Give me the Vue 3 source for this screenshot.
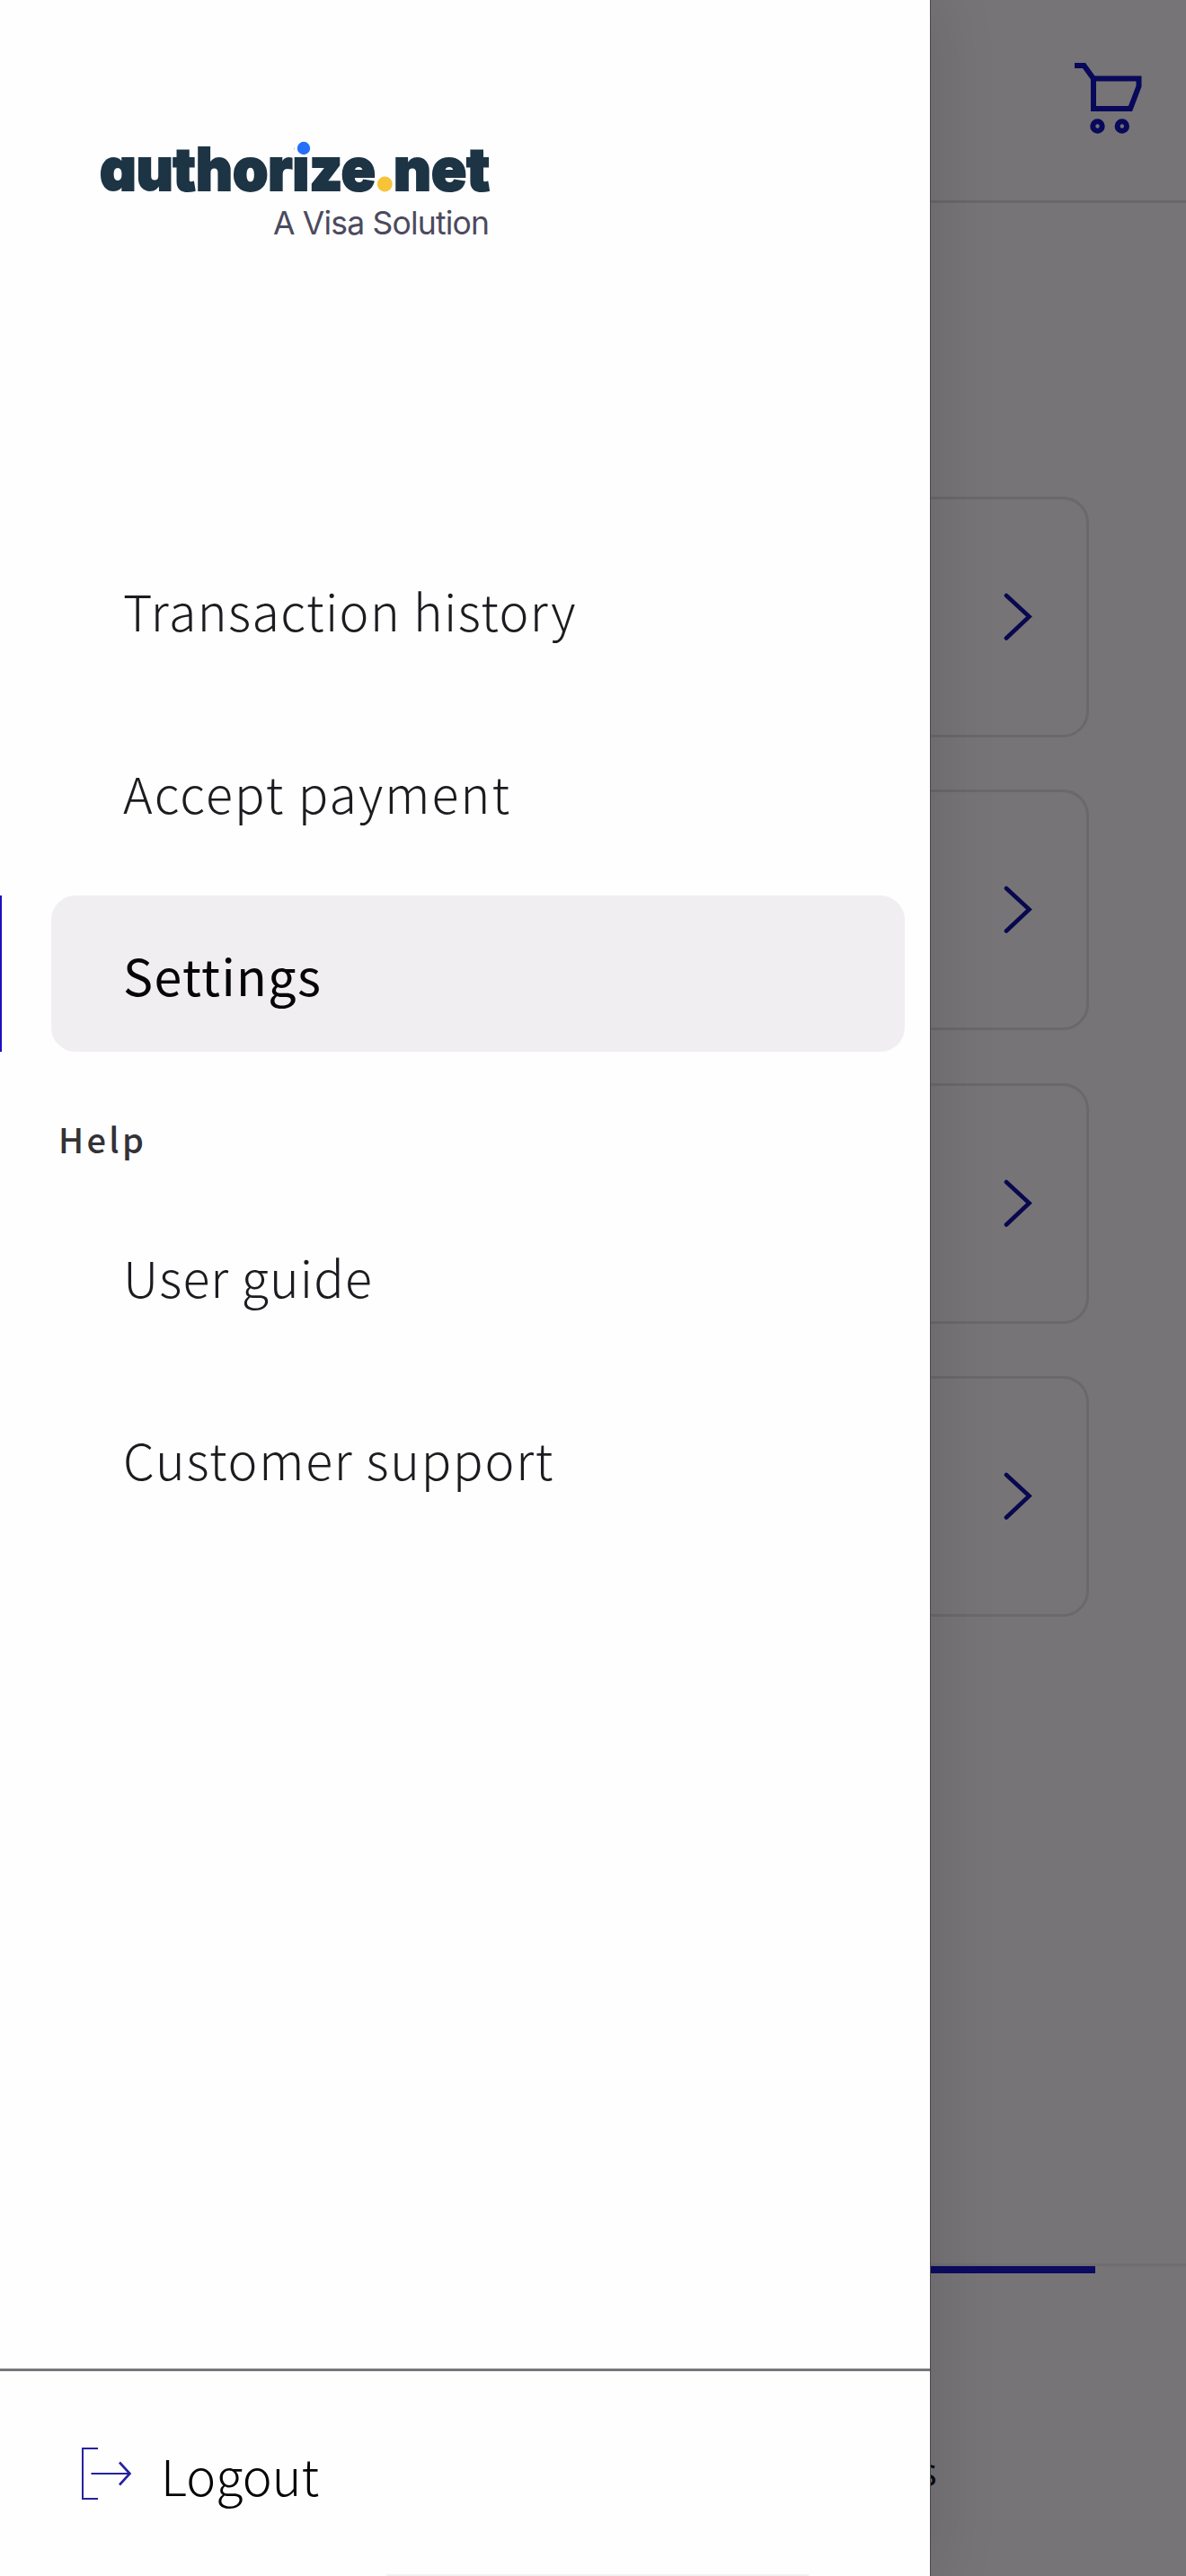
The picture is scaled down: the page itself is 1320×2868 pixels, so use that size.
<template>
  <div class="screen">
    <!-- Page under the drawer -->
    <div class="page">
      <header class="page-header">
        <svg class="cart-icon" viewBox="0 0 80 84" fill="none" stroke="#08095a" stroke-width="6">
          <path d="M3 7H13.5L24 21.5" />
          <path d="M24 21.5H74.5V30L65 55H24Z" />
          <circle cx="28.5" cy="74.5" r="5.2" />
          <circle cx="55.8" cy="74.5" r="5.2" />
        </svg>
      </header>

      <main class="cards">
        <div v-for="n in 4" :key="n" class="card">
          <svg class="chevron" viewBox="0 0 32 54" fill="none" stroke="#08084f" stroke-width="4.6" stroke-linecap="round">
            <path d="M3 3L28.5 26.500L3 50.500" />
          </svg>
        </div>
      </main>

      <footer class="tab-bar">
        <div class="tab active">
          <span class="tab-label">s</span>
        </div>
        <div class="tab-rest"></div>
      </footer>
    </div>

    <!-- Side drawer -->
    <aside class="drawer">
      <svg class="logo" viewBox="0 0 460 130">
        <g class="logo-name">
          <text x="11" y="66.5" textLength="307" lengthAdjust="spacingAndGlyphs">authorize</text>
          <text x="320" y="66.5" class="logo-dot" textLength="16" lengthAdjust="spacingAndGlyphs">.</text>
          <text x="338" y="66.5" textLength="107" lengthAdjust="spacingAndGlyphs">net</text>
        </g>
        <rect x="228" y="9" width="20" height="19" fill="#fefefe" />
        <circle cx="238" cy="20" r="7.2" fill="#256ffb" />
        <circle cx="328.3" cy="60" r="8.4" fill="#f6c436" />
        <text x="204" y="115.5" class="logo-tagline" textLength="241">A Visa Solution</text>
      </svg>

      <nav class="menu">
        <div v-for="item in mainItems" :key="item.label" class="menu-row" :class="{ selected: item.label === current }">
          <a class="menu-item"><span :class="item.name">{{ item.label }}</span></a>
        </div>
        <div class="menu-heading">Help</div>
        <div v-for="item in helpItems" :key="item.label" class="menu-row">
          <a class="menu-item"><span :class="item.name">{{ item.label }}</span></a>
        </div>
      </nav>

      <div class="logout">
        <svg class="logout-icon" viewBox="0 0 60 62" fill="none" stroke="#2422a0" stroke-width="2">
          <path d="M20 3H3V59H20" />
          <path d="M12.5 31H55" />
          <path d="M44 18.5L55.5 31L44 43.5" stroke-width="2.6" />
        </svg>
        <span class="logout-label">Logout</span>
      </div>
      <div class="home-hint"></div>
    </aside>
  </div>
</template>

<script setup>
import { ref } from 'vue'

const current = ref('Settings')

const mainItems = [
  { label: 'Transaction history', name: 'history' },
  { label: 'Accept payment', name: 'payment' },
  { label: 'Settings', name: 'settings' }
]

const helpItems = [
  { label: 'User guide', name: 'guide' },
  { label: 'Customer support', name: 'support' }
]
</script>

<style>
body {
  margin: 0;
}
</style>

<style scoped>
.screen {
  position: relative;
  width: 1320px;
  height: 2868px;
  overflow: hidden;
  box-sizing: border-box;
  background: #767477;
  font-family: "Noto Sans CJK SC", "Open Sans", sans-serif;
}

.page {
  height: 100%;
  display: flex;
  flex-direction: column;
}

.page-header {
  height: 226px;
  box-sizing: border-box;
  display: flex;
  justify-content: flex-end;
  padding: 66px 47px 0 0;
  border-bottom: 3px solid #69676a;
}

.cart-icon {
  width: 80px;
  height: 84px;
}

.cards {
  flex: 1;
  display: flex;
  flex-direction: column;
  gap: 58.5px;
  padding: 326.5px 108px 0;
}

.card {
  height: 268px;
  box-sizing: border-box;
  display: flex;
  align-items: center;
  justify-content: flex-end;
  padding-right: 60px;
  border: 3px solid #6a686b;
  border-radius: 29px;
}

.chevron {
  width: 32px;
  height: 54px;
}

.tab-bar {
  height: 348px;
  box-sizing: border-box;
  border-top: 3px solid #6f6d70;
  display: flex;
}

.tab {
  width: 1219px;
  box-sizing: border-box;
  border-top: 8px solid #0b0b60;
  display: flex;
  justify-content: flex-end;
  padding: 192px 176px 0 0;
}

.tab-label {
  font-family: "Open Sans", sans-serif;
  font-size: 44px;
  line-height: 56px;
  color: #0a0a0c;
}

.tab-rest {
  flex: 1;
}

.drawer {
  position: absolute;
  top: 0;
  left: 0;
  width: 1035px;
  height: 2868px;
  display: flex;
  flex-direction: column;
  background: #fefefe;
  box-shadow: 1px 0 0 #4a494b, 0 0 70px rgba(0, 0, 0, 0.14);
}

.logo {
  width: 460px;
  height: 130px;
  margin: 145px 0 0 100px;
  flex: none;
}

.logo-name {
  font-family: Inter, sans-serif;
  font-size: 66px;
  font-weight: 900;
  font-feature-settings: "cv11";
  fill: #1d3445;
  stroke: #1d3445;
  stroke-width: 2px;
}

.logo-dot {
  fill: #f6c436;
  stroke: none;
}

.logo-tagline {
  font-family: Inter, sans-serif;
  font-size: 35.5px;
  fill: #4b4a5e;
}

.menu {
  flex: 1;
  display: flex;
  flex-direction: column;
  padding-top: 316px;
}

.menu-row {
  height: 174px;
  margin-bottom: 29px;
  box-sizing: border-box;
  padding: 0 28px 0 55px;
  border-left: 2px solid transparent;
}

.menu-item {
  height: 100%;
  display: flex;
  align-items: center;
  box-sizing: border-box;
  padding: 2px 0 0 80px;
  border-radius: 27px;
  font-size: 55.5px;
  font-weight: 300;
  line-height: 80px;
  color: #1c1b1f;
  white-space: nowrap;
}

.selected {
  border-left-color: #1d10c0;
  margin-bottom: 0;
}

.selected .menu-item {
  background: #f0eef1;
  font-weight: 400;
  color: #050507;
}

.history {
  letter-spacing: 1.45px;
}

.payment {
  letter-spacing: 2.1px;
}

.settings {
  letter-spacing: 1.4px;
}

.guide {
  letter-spacing: 1.1px;
}

.support {
  letter-spacing: 1.75px;
}

.menu-heading {
  height: 162px;
  box-sizing: border-box;
  padding: 69px 0 0 65px;
  font-size: 38px;
  font-weight: 500;
  line-height: 56px;
  letter-spacing: 3.3px;
  color: #333236;
}

.logout {
  height: 231px;
  box-sizing: border-box;
  display: flex;
  align-items: center;
  gap: 30px;
  padding-left: 89px;
  border-top: 3px solid #77757a;
}

.logout-icon {
  width: 60px;
  height: 62px;
}

.logout-label {
  padding-top: 2px;
  font-size: 55.5px;
  font-weight: 300;
  line-height: 80px;
  color: #050507;
}

.home-hint {
  position: absolute;
  left: 430px;
  bottom: 0;
  width: 470px;
  height: 2px;
  background: #f1eff2;
}
</style>
